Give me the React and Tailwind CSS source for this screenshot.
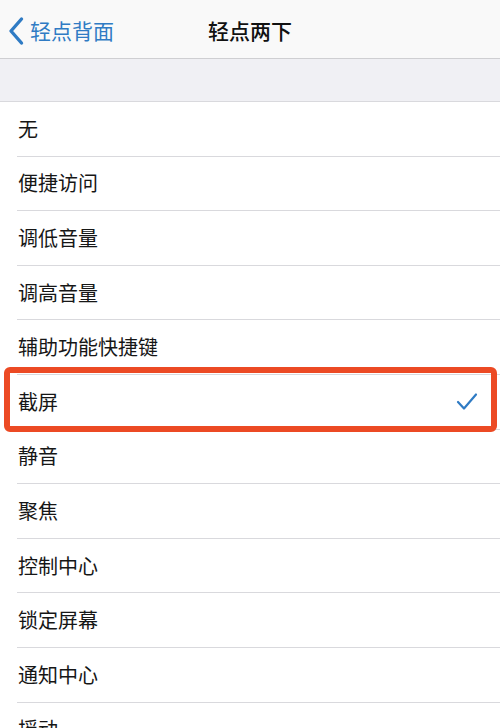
import React from 'react';

const ITEMS = [
  '无',
  '便捷访问',
  '调低音量',
  '调高音量',
  '辅助功能快捷键',
  '截屏',
  '静音',
  '聚焦',
  '控制中心',
  '锁定屏幕',
  '通知中心',
  '摇动',
];

const SELECTED = '截屏';

function Row({ label }) {
  const selected = label === SELECTED;
  return (
    <div className="relative h-[54.6px] pl-[17px]">
      <div className="flex h-full items-center border-b border-[#d9d9dd] pr-[22px]">
        <span className="flex-1 pl-[1px] text-[20px] text-[#161616]">{label}</span>
        {selected && (
          <svg width="22" height="19" viewBox="0 0 22 19" fill="none">
            <path d="M2 10 L8 16.5 L20 2.5" stroke="#2f7bc4" strokeWidth="2.2" strokeLinecap="round" strokeLinejoin="round" />
          </svg>
        )}
      </div>
      {selected && (
        <div className="pointer-events-none absolute left-[4px] right-[3px] top-[-8px] bottom-[-2px] rounded-[6px] border-[6px] border-[#ec4a24]" />
      )}
    </div>
  );
}

export default function App() {
  return (
    <div
      className="h-[728px] w-[500px] overflow-hidden bg-white"
      style={{ fontFamily: '"Noto Sans CJK SC", "Noto Sans", sans-serif' }}
    >
      {/* Nav bar */}
      <div className="relative flex h-[59px] items-center border-b border-[#cfcfd2] bg-[#f9f9f9] pt-[3px]">
        <div className="flex items-center pl-[8px]">
          <svg width="16" height="30" viewBox="0 0 16 30" fill="none">
            <path d="M13.5 3 L3 15 L13.5 27" stroke="#2f7bc4" strokeWidth="3.4" strokeLinecap="round" strokeLinejoin="round" />
          </svg>
          <span className="ml-[6px] text-[21px] text-[#2f7bc4]">轻点背面</span>
        </div>
        <span className="absolute left-1/2 -translate-x-1/2 text-[21px] font-medium text-[#111]">轻点两下</span>
      </div>

      {/* Group header */}
      <div className="h-[43px] border-b border-[#d9d9dd] bg-[#f0f0f4]" />

      {ITEMS.map((label) => (
        <Row key={label} label={label} />
      ))}
    </div>
  );
}
